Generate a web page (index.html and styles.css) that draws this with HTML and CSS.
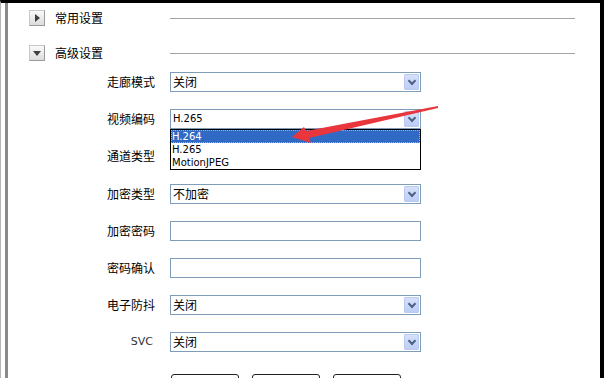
FILE: index.html
```html
<!DOCTYPE html>
<html lang="zh-CN">
<head>
    <meta charset="UTF-8">
    <title>高级设置</title>
    <link rel="stylesheet" href="styles.css">
</head>
<body>
    <div class="frame">
        <div class="panel">
            <div class="section-head">
                <span class="toggle"><span class="tri tri-right"></span></span>
                <span class="section-title">常用设置</span>
                <span class="section-line"></span>
            </div>

            <div class="section-head head-open">
                <span class="toggle"><span class="tri tri-down"></span></span>
                <span class="section-title">高级设置</span>
                <span class="section-line"></span>
            </div>

            <div class="form">
                <div class="row">
                    <label class="label">走廊模式</label>
                    <div class="select"><span class="value">关闭</span><span class="drop-btn"></span></div>
                </div>
                <div class="row">
                    <label class="label">视频编码</label>
                    <div class="select select-open">
                        <span class="value latin">H.265</span><span class="drop-btn"></span>
                        <ul class="drop-list">
                            <li class="active">H.264</li>
                            <li>H.265</li>
                            <li>MotionJPEG</li>
                        </ul>
                    </div>
                </div>
                <div class="row">
                    <label class="label">通道类型</label>
                    <div class="select"><span class="value"></span><span class="drop-btn"></span></div>
                </div>
                <div class="row">
                    <label class="label">加密类型</label>
                    <div class="select"><span class="value">不加密</span><span class="drop-btn"></span></div>
                </div>
                <div class="row">
                    <label class="label">加密密码</label>
                    <div class="input"></div>
                </div>
                <div class="row">
                    <label class="label">密码确认</label>
                    <div class="input"></div>
                </div>
                <div class="row">
                    <label class="label">电子防抖</label>
                    <div class="select"><span class="value">关闭</span><span class="drop-btn"></span></div>
                </div>
                <div class="row">
                    <label class="label latin">SVC</label>
                    <div class="select"><span class="value">关闭</span><span class="drop-btn"></span></div>
                </div>
            </div>

            <div class="buttons">
                <span class="btn"></span>
                <span class="btn"></span>
                <span class="btn"></span>
            </div>
        </div>

        <!-- red annotation arrow drawn over the page -->
        <svg class="annot" width="604" height="378" viewBox="0 0 604 378">
            <polygon fill="#e8363c" points="292,137 304,127 306,131 438,106 438,108 309,138 311,143"/>
        </svg>
    </div>
</body>
</html>
```

FILE: styles.css
```css
body {
    margin: 0;
    background-color: #fff;
    font-family: "Noto Sans CJK SC", sans-serif;
    font-size: 12px;
    color: #000;
    overflow: hidden;
}

.frame {
    position: relative;
    height: 375px;
    border-top: 3px solid #000;
    border-right: 4px solid #000;
    border-left: 1px solid #b4b4b4;
}

.panel {
    margin-left: 4px;
    height: 100%;
    border-left: 3px solid #8a8a8a;
}

.section-head {
    display: flex;
    align-items: center;
    height: 30px;
    padding-left: 21px;
}

.head-open {
    margin-top: 5px;
}

.toggle {
    display: flex;
    align-items: center;
    justify-content: center;
    width: 14px;
    height: 14px;
    border: 1px solid #c8c8c8;
    border-right-color: #9a9a9a;
    border-bottom-color: #9a9a9a;
    background: linear-gradient(#fafafa, #dcdcdc);
}

.tri {
    width: 0;
    height: 0;
}

.tri-right {
    border-top: 4px solid transparent;
    border-bottom: 4px solid transparent;
    border-left: 5px solid #404040;
    margin-left: 1px;
}

.tri-down {
    border-left: 4px solid transparent;
    border-right: 4px solid transparent;
    border-top: 5px solid #404040;
    margin-top: 1px;
}

.section-title {
    margin-left: 10px;
    line-height: 14px;
}

.section-line {
    width: 405px;
    height: 1px;
    margin-left: auto;
    margin-right: 25px;
    background-color: #a3a3a3;
}

.form {
    display: flex;
    flex-direction: column;
    gap: 17.2px;
    margin-top: 4px;
}

.row {
    display: flex;
    align-items: center;
    height: 20px;
}

.label {
    width: 147px;
    text-align: right;
    margin-right: 15px;
    line-height: 14px;
}

.latin {
    font-family: "DejaVu Sans", sans-serif;
    font-size: 10px;
}

.label.latin {
    font-size: 11px;
    color: #333;
    padding-right: 2px;
    width: 145px;
}

.select,
.input {
    position: relative;
    box-sizing: border-box;
    width: 251px;
    height: 20px;
    border: 1px solid #7f9db9;
    background-color: #fff;
}

.select {
    display: flex;
    align-items: center;
    padding-left: 2px;
}

.value {
    flex: 1;
    line-height: 14px;
}

.drop-btn {
    position: relative;
    box-sizing: border-box;
    width: 15px;
    height: 16px;
    margin-right: 1px;
    border: 1px solid #b9cbef;
    border-radius: 1px;
    background: linear-gradient(#d6e1fa, #bccdf6);
}

.drop-btn::after {
    content: "";
    position: absolute;
    left: 4px;
    top: 3px;
    width: 4px;
    height: 4px;
    border-right: 2px solid #4d6185;
    border-bottom: 2px solid #4d6185;
    transform: rotate(45deg);
}

.drop-list {
    position: absolute;
    left: -1px;
    top: 19px;
    z-index: 2;
    box-sizing: border-box;
    width: 251px;
    margin: 0;
    padding: 0;
    list-style: none;
    border: 1px solid #000;
    background-color: #fff;
    font-family: "DejaVu Sans", sans-serif;
    font-size: 10px;
}

.drop-list li {
    height: 13px;
    line-height: 13px;
    padding-left: 1px;
}

.drop-list .active {
    background-color: #316ac5;
    color: #fff;
    outline: 1px dotted #9ab4e0;
    outline-offset: -1px;
}

.buttons {
    display: flex;
    gap: 13px;
    margin-top: 22px;
    padding-left: 163px;
}

.btn {
    box-sizing: border-box;
    width: 68px;
    height: 22px;
    border: 1px solid #222;
    border-radius: 3px;
    background-color: #fff;
}

.annot {
    position: absolute;
    left: -1px;
    top: -3px;
    z-index: 5;
    pointer-events: none;
}
```
